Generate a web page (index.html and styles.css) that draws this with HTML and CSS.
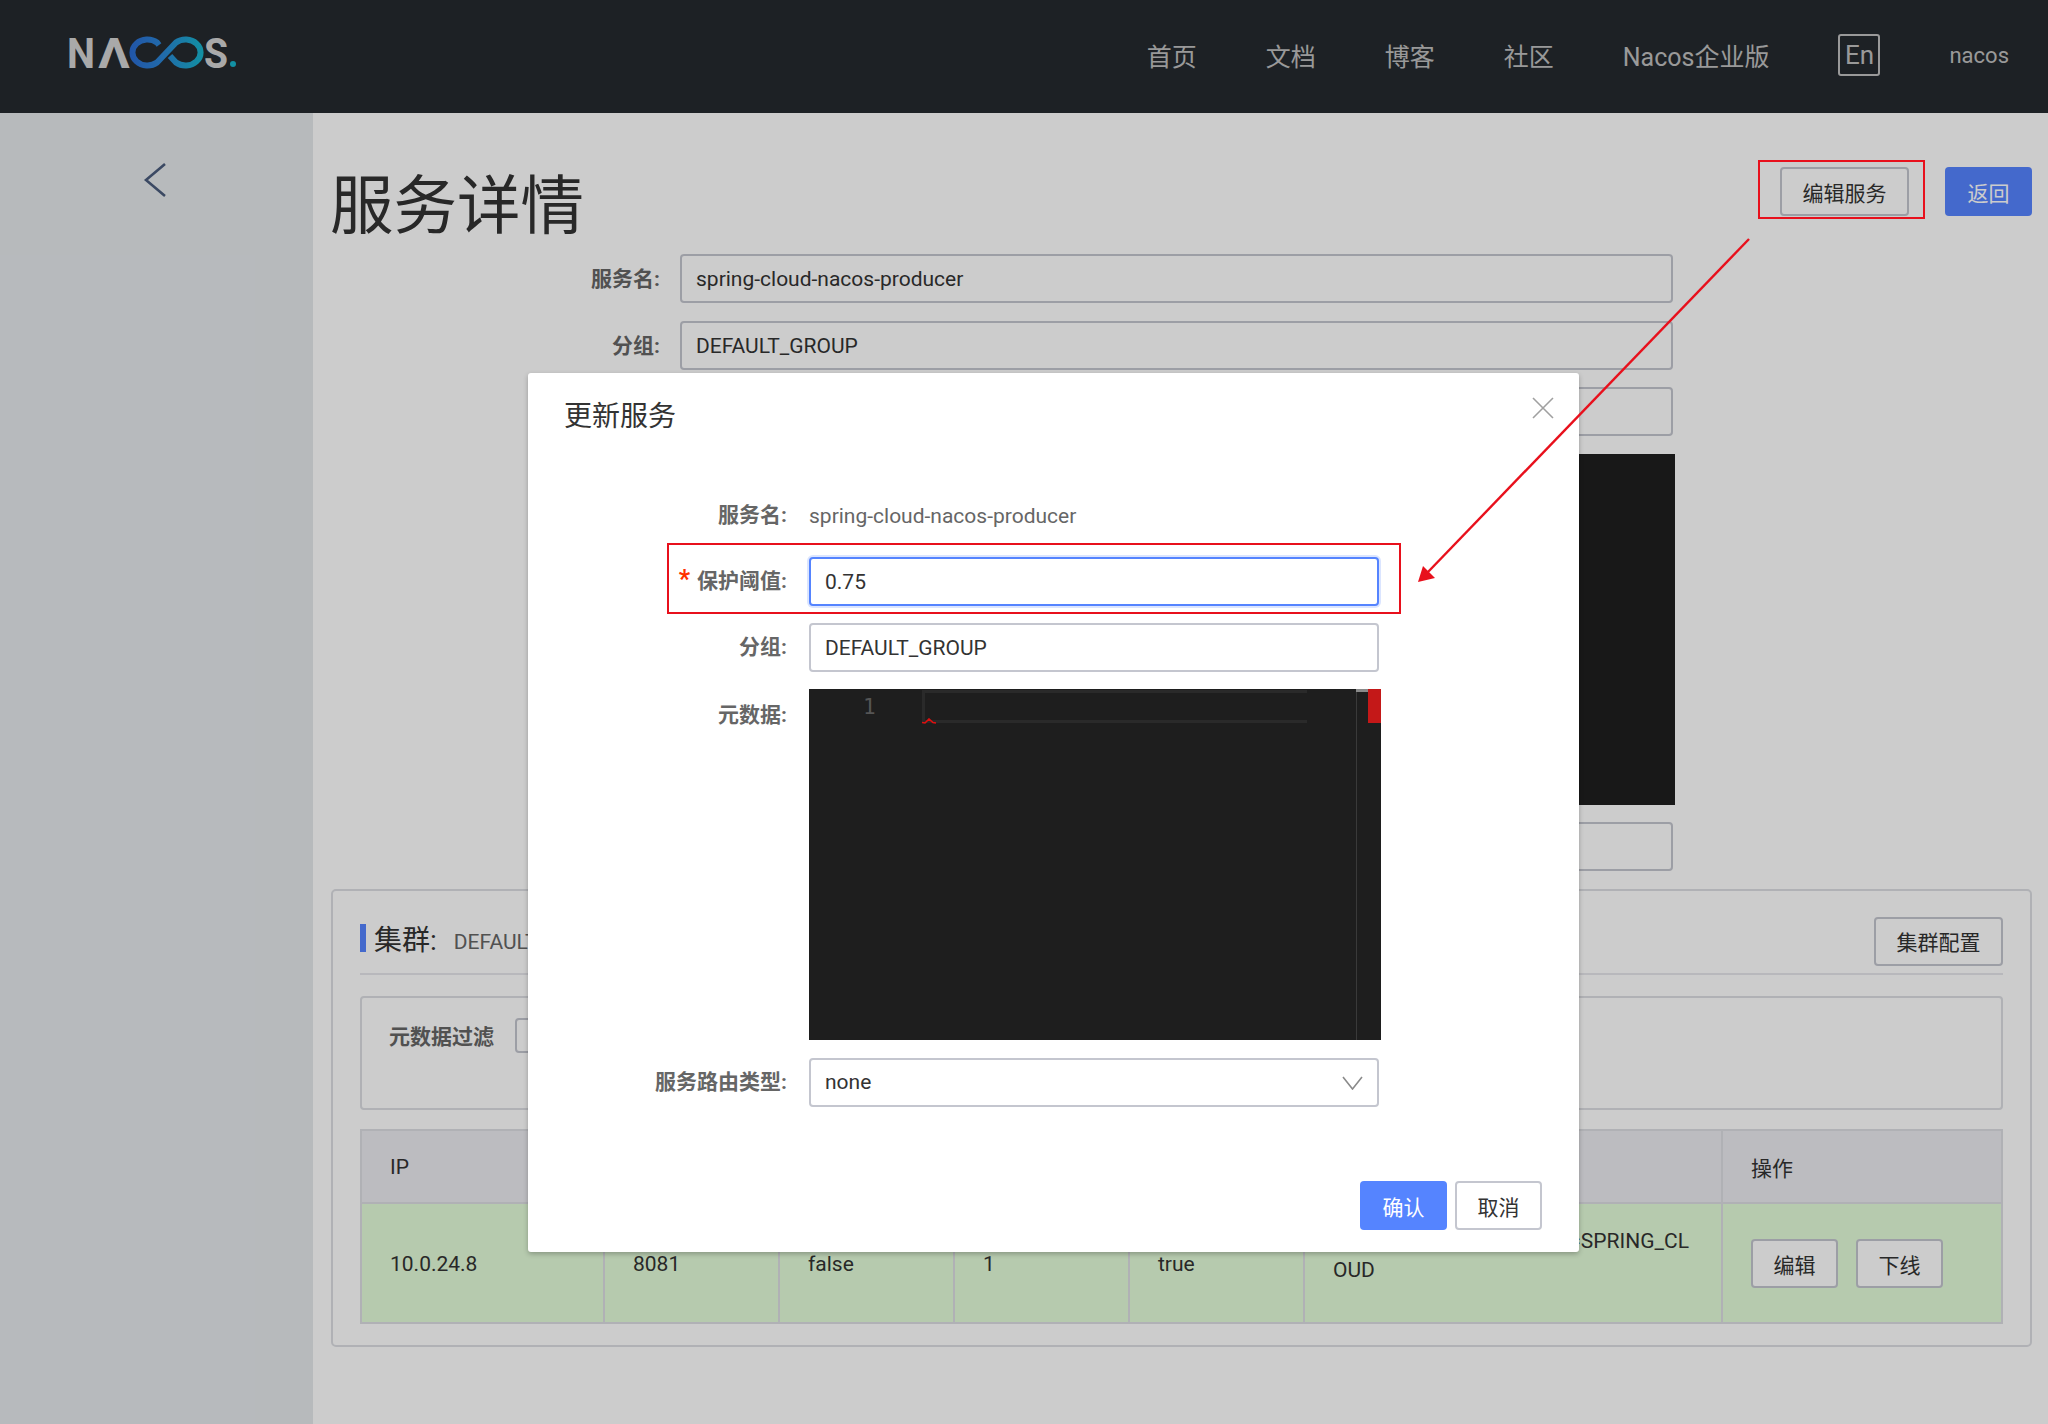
FILE: index.html
```html
<!DOCTYPE html>
<html lang="zh-CN">
<head>
    <meta charset="UTF-8">
    <title>服务详情</title>
    <link rel="stylesheet" href="styles.css">
</head>
<body>

<header class="top_bar">
    <svg class="logo" width="172" height="50" viewBox="0 0 172 50">
        <defs>
            <linearGradient id="loopGradient" gradientUnits="userSpaceOnUse" x1="64" y1="0" x2="137" y2="0">
                <stop offset="0" stop-color="#2a6bd2"/>
                <stop offset="0.45" stop-color="#2a86d6"/>
                <stop offset="1" stop-color="#17b4cc"/>
            </linearGradient>
        </defs>
        <text class="logo_text" x="1" y="40" textLength="28" lengthAdjust="spacingAndGlyphs">N</text>
        <text class="logo_text" x="32" y="40" textLength="32" lengthAdjust="spacingAndGlyphs">Λ</text>
        <path d="M93 17 L91 14.5 A15 13 0 1 0 91 34.5 L110 14.5 A15 13 0 1 1 110 34.5 L104 28" fill="none" stroke="url(#loopGradient)" stroke-width="6"/>
        <text class="logo_text" x="138" y="40" textLength="24" lengthAdjust="spacingAndGlyphs">S</text>
        <circle cx="167" cy="36" r="3" fill="#17b4cc"/>
    </svg>
    <nav class="top_nav">
        <a>首页</a>
        <a>文档</a>
        <a>博客</a>
        <a>社区</a>
        <a>Nacos企业版</a>
        <a class="lang_switch">En</a>
        <a class="user_name">nacos</a>
    </nav>
</header>

<div class="layout">
    <aside class="side_bar">
        <svg width="24" height="36" viewBox="0 0 24 36"><polyline points="22,2 3,18 22,34" fill="none" stroke="#4a5c7c" stroke-width="2.6"/></svg>
    </aside>

    <main class="content">
        <div class="page_head">
            <h1>服务详情</h1>
            <div class="page_actions">
                <button class="btn btn_edit">编辑服务</button>
                <button class="btn btn_primary">返回</button>
            </div>
        </div>

        <div class="detail_form">
            <div class="form_row"><label>服务名:</label><div class="input">spring-cloud-nacos-producer</div></div>
            <div class="form_row"><label>分组:</label><div class="input">DEFAULT_GROUP</div></div>
            <div class="form_row"><label>保护阈值:</label><div class="input">0.75</div></div>
            <div class="form_row"><label>元数据:</label><div class="editor_dark"></div></div>
            <div class="form_row"><label>服务路由类型:</label><div class="input">none</div></div>
        </div>

        <section class="cluster_card">
            <div class="cluster_head">
                <h2>集群:</h2>
                <span class="cluster_name">DEFAULT</span>
                <button class="btn">集群配置</button>
            </div>
            <div class="filter_box">
                <strong>元数据过滤</strong>
                <div class="input filter_input"></div>
            </div>
            <table class="instance_table">
                <tr>
                    <th class="col_ip">IP</th>
                    <th class="col_port">端口</th>
                    <th class="col_tmp">临时实例</th>
                    <th class="col_weight">权重</th>
                    <th class="col_health">健康状态</th>
                    <th class="col_meta">元数据</th>
                    <th>操作</th>
                </tr>
                <tr class="row_ok">
                    <td>10.0.24.8</td>
                    <td>8081</td>
                    <td>false</td>
                    <td>1</td>
                    <td>true</td>
                    <td class="meta_cell">preserved.register.source=SPRING_CLOUD</td>
                    <td>
                        <div class="row_actions">
                            <button class="btn">编辑</button>
                            <button class="btn">下线</button>
                        </div>
                    </td>
                </tr>
            </table>
        </section>
    </main>
</div>

<div class="mask"></div>

<div class="dialog">
    <h3>更新服务</h3>
    <svg class="dialog_close" width="24" height="22" viewBox="0 0 24 22"><path d="M2 1 L22 21 M22 1 L2 21" stroke="#a0a0a0" stroke-width="1.6" fill="none"/></svg>

    <div class="dialog_form">
        <div class="dialog_row"><label>服务名:</label><span class="plain_value">spring-cloud-nacos-producer</span></div>
        <div class="dialog_row"><label><em>*</em>保护阈值:</label><div class="input input_focus">0.75</div></div>
        <div class="dialog_row"><label>分组:</label><div class="input">DEFAULT_GROUP</div></div>
        <div class="dialog_row dialog_row_top">
            <label>元数据:</label>
            <div class="editor">
                <span class="line_no">1</span>
                <div class="cur_line"></div>
                <svg class="squiggle" width="15" height="6" viewBox="0 0 15 6"><polyline points="0,4.5 3,5 7,1 11,4.5 14,5" fill="none" stroke="#e01010" stroke-width="1.6"/></svg>
                <div class="ruler"></div>
                <div class="ruler_top"></div>
                <div class="ruler_error"></div>
            </div>
        </div>
        <div class="dialog_row">
            <label>服务路由类型:</label>
            <div class="input select">
                none
                <svg width="21" height="14" viewBox="0 0 21 14"><polyline points="1,1 10.5,13 20,1" fill="none" stroke="#8a8a8a" stroke-width="1.6"/></svg>
            </div>
        </div>
    </div>

    <div class="dialog_footer">
        <button class="btn btn_confirm">确认</button>
        <button class="btn btn_cancel">取消</button>
    </div>
</div>

<!-- red marks drawn on the screenshot -->
<div class="mark mark_edit"></div>
<div class="mark mark_threshold"></div>
<svg class="mark_arrow" width="345" height="355" viewBox="0 0 345 355">
    <line x1="334" y1="4" x2="13" y2="337" stroke="#e8101c" stroke-width="2.4"/>
    <polygon points="3,347 8,331 20,343" fill="#e8101c"/>
</svg>

</body>
</html>
```

FILE: styles.css
```css
* {
    box-sizing: border-box;
}

body {
    margin: 0;
    width: 2048px;
    height: 1424px;
    overflow: hidden;
    position: relative;
    background: #fff;
    color: #333;
    font-family: Roboto, "Noto Sans CJK SC", sans-serif;
    font-size: 21px;
}

button {
    font-family: inherit;
}

/* Header */
.top_bar {
    height: 113px;
    background: #252a2f;
    display: flex;
    align-items: center;
    justify-content: space-between;
    padding: 0 39px 0 66px;
}

.logo {
    margin-bottom: 7px;
}

.logo_text {
    font-family: Roboto, sans-serif;
    font-weight: 700;
    font-size: 43px;
    fill: #d4d4d4;
}

.top_nav {
    display: flex;
    align-items: center;
    gap: 69px;
    margin-bottom: 3px;
    font-size: 25px;
    color: #c0c0c0;
}

.lang_switch {
    width: 42px;
    height: 42px;
    border: 2px solid #c0c0c0;
    border-radius: 3px;
    font-size: 26px;
    display: flex;
    align-items: center;
    justify-content: center;
}

.user_name {
    font-size: 22px;
}

/* Page */
.layout {
    display: flex;
    height: 1311px;
}

.side_bar {
    width: 313px;
    background: #e5e9ec;
    display: flex;
    justify-content: center;
    align-items: flex-start;
    padding: 49px 4px 0 0;
}

.content {
    flex: 1;
    padding: 54px 16px 0 18px;
}

.page_head {
    display: flex;
    justify-content: space-between;
    align-items: flex-start;
    height: 87px;
}

h1 {
    margin: -4px 0 0 -1px;
    font-size: 63.5px;
    font-weight: 400;
    line-height: 88px;
}

.page_actions {
    display: flex;
    gap: 36px;
}

.btn {
    height: 49px;
    padding: 0 22px;
    border: 2px solid #c4c6cf;
    border-radius: 4px;
    background: #fff;
    color: #333;
    font-size: 21px;
}

.btn_edit {
    width: 129px;
    padding: 0;
}

.btn_primary {
    width: 87px;
    padding: 0;
    border: none;
    background: #5584ff;
    color: #fff;
}

.detail_form {
    width: 1342px;
}

.form_row {
    display: flex;
    margin-bottom: 17.5px;
}

.form_row label {
    width: 349px;
    height: 49px;
    padding-right: 20px;
    text-align: right;
    font-weight: 700;
    color: #666;
    line-height: 51px;
}

.input {
    flex: 1;
    height: 49px;
    padding: 0 14px;
    border: 2px solid #c4c6cf;
    border-radius: 4px;
    background: #fff;
    line-height: 47px;
}

.editor_dark {
    flex: 1;
    height: 351px;
    margin-right: -2px;
    background: #1e1e1e;
}

/* Cluster card */
.cluster_card {
    height: 458px;
    padding: 26px 27px 0 27px;
    border: 2px solid #dcdee3;
    border-radius: 5px;
    background: #fff;
}

.cluster_head {
    display: flex;
    align-items: flex-start;
    height: 58px;
    border-bottom: 2px solid #e6e7eb;
}

.cluster_head .btn {
    margin-left: auto;
    width: 129px;
    padding: 0;
}

h2 {
    margin: 7px 17px 0 0;
    padding: 6px 0 0 8px;
    border-left: 6px solid #5584ff;
    font-size: 28px;
    line-height: 22px;
    font-weight: 400;
}

.cluster_name {
    margin-top: 13px;
    color: #666;
}

.filter_box {
    display: flex;
    height: 114px;
    margin-top: 21px;
    padding: 20px 27px;
    gap: 21px;
    border: 2px solid #dcdee3;
    border-radius: 4px;
}

.filter_box strong {
    color: #666;
    line-height: 38px;
}

.filter_input {
    flex: none;
    width: 300px;
    height: 35px;
}

.instance_table {
    width: 100%;
    margin-top: 19px;
    border-collapse: collapse;
    table-layout: fixed;
}

.instance_table th,
.instance_table td {
    padding: 2px 28px 0 28px;
    border: 2px solid #dcdee3;
    text-align: left;
    font-weight: 400;
}

.instance_table th {
    height: 73px;
    background: #ebecf0;
}

.instance_table td {
    height: 120px;
    background: #e4fdda;
}

.col_ip {
    width: 243px;
}

.col_port,
.col_tmp,
.col_weight,
.col_health {
    width: 175px;
}

.col_meta {
    width: 418px;
}

.instance_table .meta_cell {
    padding-bottom: 16px;
    word-break: break-all;
    line-height: 29px;
}

.row_actions {
    display: flex;
    gap: 18px;
}

.row_actions .btn {
    width: 87px;
    padding: 0;
}

/* Dialog */
.mask {
    position: absolute;
    inset: 0;
    background: rgba(0, 0, 0, 0.2);
}

.dialog {
    position: absolute;
    left: 528px;
    top: 373px;
    width: 1051px;
    height: 879px;
    padding: 24px 37px 0 36px;
    border-radius: 3px;
    background: #fff;
    box-shadow: 0 2px 5px rgba(0, 0, 0, 0.25);
}

h3 {
    margin: 0;
    font-size: 28px;
    font-weight: 400;
    line-height: 40px;
}

.dialog_close {
    position: absolute;
    right: 24px;
    top: 24px;
}

.dialog_form {
    margin-top: 54px;
}

.dialog_row {
    display: flex;
    align-items: center;
    height: 49px;
    margin-bottom: 17px;
}

.dialog_row_top {
    height: 351px;
    margin-bottom: 18px;
    align-items: flex-start;
}

.dialog_row label {
    flex: none;
    width: 245px;
    padding-right: 22px;
    text-align: right;
    font-weight: 700;
    color: #666;
    line-height: 51px;
}

.dialog_row_top label {
    line-height: 53px;
}

.dialog_row label em {
    margin-right: 7px;
    font-size: 25px;
    line-height: 1;
    font-style: normal;
    color: #ff3000;
}

.dialog_row .input {
    flex: none;
    width: 570px;
}

.plain_value {
    color: #666;
}

.input_focus {
    border-color: #5584ff;
    box-shadow: 0 0 0 2px #dbe5ff;
}

.select {
    display: flex;
    align-items: center;
    justify-content: space-between;
}

.editor {
    position: relative;
    width: 572px;
    height: 351px;
    background: #1e1e1e;
}

.line_no {
    position: absolute;
    left: 54px;
    top: 3px;
    font-size: 21px;
    line-height: 30px;
    color: #555;
    font-family: "DejaVu Sans Mono", monospace;
}

.cur_line {
    position: absolute;
    left: 113px;
    top: 1px;
    width: 385px;
    height: 33px;
    border-top: 3px solid #2a2a2a;
    border-left: 3px solid #2a2a2a;
    border-bottom: 3px solid #2a2a2a;
}

.squiggle {
    position: absolute;
    left: 113px;
    top: 29px;
}

.ruler {
    position: absolute;
    left: 547px;
    top: 0;
    bottom: 0;
    width: 1px;
    background: #3a3a3a;
}

.ruler_top {
    position: absolute;
    left: 547px;
    top: 0;
    width: 12px;
    height: 3px;
    background: #8a8a8a;
}

.ruler_error {
    position: absolute;
    left: 559px;
    top: 0;
    width: 13px;
    height: 34px;
    background: #c41818;
}

.dialog_footer {
    position: absolute;
    right: 37px;
    bottom: 22px;
    display: flex;
    gap: 8px;
}

.btn_confirm,
.btn_cancel {
    width: 87px;
    padding: 0;
}

.btn_confirm {
    border: none;
    background: #5584ff;
    color: #fff;
}

/* Marks on top of the screenshot */
.mark {
    position: absolute;
    border: 2px solid #e8101c;
}

.mark_edit {
    left: 1758px;
    top: 160px;
    width: 167px;
    height: 59px;
}

.mark_threshold {
    left: 667px;
    top: 543px;
    width: 734px;
    height: 71px;
}

.mark_arrow {
    position: absolute;
    left: 1415px;
    top: 235px;
}
```
